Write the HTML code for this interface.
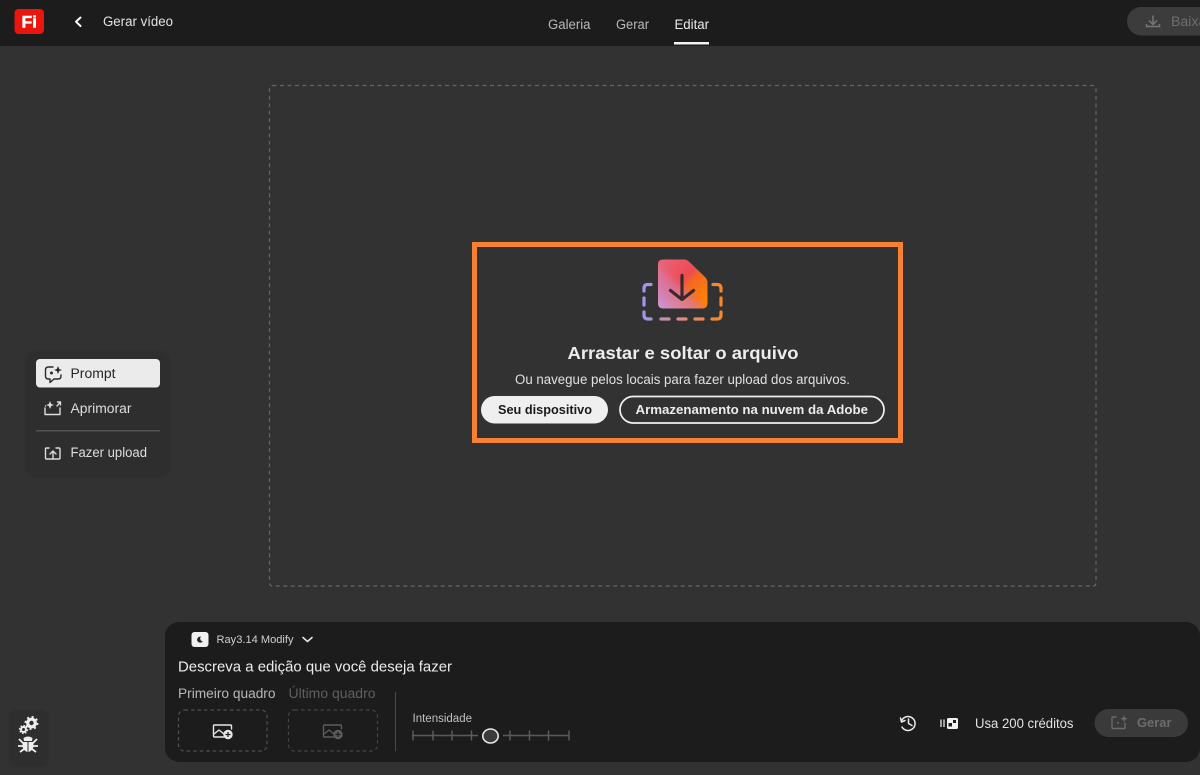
<!DOCTYPE html>
<html lang="pt">
<head>
<meta charset="utf-8">
<title>Gerar vídeo</title>
<style>
html,body{margin:0;padding:0;width:1200px;height:775px;overflow:hidden;background:#323232}
svg{display:block}
text{font-family:"Liberation Sans",sans-serif}
</style>
</head>
<body>
<svg width="1200" height="775" viewBox="0 0 1200 775" xmlns="http://www.w3.org/2000/svg">
<defs>
<linearGradient id="doc" x1="0" y1="0" x2="1" y2="1">
<stop offset="0" stop-color="#e8687c"/><stop offset=".45" stop-color="#ee4a52"/><stop offset=".58" stop-color="#f56a20"/><stop offset="1" stop-color="#ff8a00"/>
</linearGradient>
<linearGradient id="doc2" x1="0" y1="1" x2="1" y2="0">
<stop offset="0" stop-color="#c89ae0"/><stop offset=".4" stop-color="#d878a0" stop-opacity=".7"/><stop offset=".55" stop-color="#ee5a6c" stop-opacity="0"/>
</linearGradient>
<linearGradient id="dash" gradientUnits="userSpaceOnUse" x1="644" y1="319" x2="721" y2="319">
<stop offset="0" stop-color="#a394ee"/><stop offset=".45" stop-color="#e08a8c"/><stop offset="1" stop-color="#f8862a"/>
</linearGradient>
<filter id="sh" x="-20%" y="-20%" width="140%" height="140%"><feDropShadow dx="0" dy="1" stdDeviation="3" flood-color="#000" flood-opacity=".22"/></filter>
</defs>

<rect width="1200" height="775" fill="#323232"/>
<rect width="1200" height="46" fill="#1c1c1c"/>

<!-- logo -->
<rect x="14.500" y="9" width="29.500" height="25" rx="4" fill="#e9160e"/>
<text x="21.500" y="27.700" font-size="16.500" font-weight="700" stroke="#fff" stroke-width=".5" fill="#fff" textLength="15.500" lengthAdjust="spacingAndGlyphs">Fi</text>

<!-- back -->
<path d="M80.500 17.500 L76 21.700 L80.500 26" fill="none" stroke="#fff" stroke-width="2" stroke-linecap="round" stroke-linejoin="round"/>
<text x="103" y="26" font-size="13.500" fill="#e2e2e2" textLength="70" lengthAdjust="spacingAndGlyphs">Gerar vídeo</text>

<!-- tabs -->
<text x="548" y="29" font-size="13.500" fill="#b8b8b8" textLength="42.500" lengthAdjust="spacingAndGlyphs">Galeria</text>
<text x="616" y="29" font-size="13.500" fill="#b8b8b8" textLength="33" lengthAdjust="spacingAndGlyphs">Gerar</text>
<text x="674.500" y="29" font-size="13.500" fill="#ececec" textLength="34.500" lengthAdjust="spacingAndGlyphs">Editar</text>
<rect x="674" y="42" width="35" height="2.500" fill="#f2f2f2"/>

<!-- download btn -->
<rect x="1127" y="7" width="120" height="28.500" rx="14.250" fill="#3c3c3c"/>
<path d="M1153 15.500 V24 M1149 20.500 L1153 24.500 L1157 20.500 M1146.500 24 V26.500 H1159.500 V24" fill="none" stroke="#777" stroke-width="1.500"/>
<text x="1171" y="26" font-size="13.500" fill="#6f6f6f" textLength="40" lengthAdjust="spacingAndGlyphs">Baixar</text>

<!-- dropzone -->
<rect x="269.500" y="85.500" width="826.500" height="500.500" rx="3" fill="none" stroke="#666" stroke-width="1.200" stroke-dasharray="4 3.500"/>

<!-- orange highlight -->
<rect x="474.500" y="244.500" width="426" height="196" fill="none" stroke="#f58232" stroke-width="5"/>

<!-- upload illustration -->
<g fill="none" stroke="url(#dash)" stroke-width="3.200" stroke-linecap="round">
<path d="M651 284.500 H648 Q644 284.500 644 288.500 V291"/>
<path d="M644 298 V305"/>
<path d="M644 312 V315 Q644 319 648 319 H651"/>
<path d="M661 319 H669 M678 319 H686 M695 319 H703"/>
<path d="M712 319 H717 Q721 319 721 315 V312"/>
<path d="M721 305 V298"/>
<path d="M713 284.500 H717 Q721 284.500 721 288.500 V291"/>
</g>
<path d="M663 259.500 H684 Q687 259.500 689.500 262 L705 277 Q707.500 279.500 707.500 282.500 V303 Q707.500 308.500 702 308.500 H663.500 Q658 308.500 658 303 V264.500 Q658 259.500 663 259.500 Z" fill="url(#doc)"/>
<path d="M663 259.500 H684 Q687 259.500 689.500 262 L705 277 Q707.500 279.500 707.500 282.500 V303 Q707.500 308.500 702 308.500 H663.500 Q658 308.500 658 303 V264.500 Q658 259.500 663 259.500 Z" fill="url(#doc2)"/>
<path d="M682 275.500 V298 M670.500 290.500 L682 299.500 L693.500 290.500" fill="none" stroke="#3a2a30" stroke-width="3.200" stroke-linecap="round" stroke-linejoin="round"/>

<text x="567.500" y="359" font-size="17.500" font-weight="700" fill="#ededed" textLength="231" lengthAdjust="spacingAndGlyphs">Arrastar e soltar o arquivo</text>
<text x="515" y="384" font-size="13.500" fill="#e0e0e0" textLength="335" lengthAdjust="spacingAndGlyphs">Ou navegue pelos locais para fazer upload dos arquivos.</text>

<rect x="481" y="396" width="127" height="27.500" rx="13.750" fill="#efefef"/>
<text x="498" y="414" font-size="13" font-weight="700" fill="#1a1a1a" textLength="94" lengthAdjust="spacingAndGlyphs">Seu dispositivo</text>
<rect x="620" y="396.500" width="264" height="26.500" rx="13.250" fill="none" stroke="#f0f0f0" stroke-width="1.700"/>
<text x="635.500" y="414" font-size="13" font-weight="700" fill="#ececec" textLength="232.500" lengthAdjust="spacingAndGlyphs">Armazenamento na nuvem da Adobe</text>

<!-- left menu -->
<rect x="27" y="352" width="141" height="122" rx="9" fill="#2e2e2e" filter="url(#sh)"/>
<rect x="36" y="359" width="124" height="28.500" rx="4" fill="#ebebeb"/>
<g fill="none" stroke="#2a2a2a" stroke-width="1.400" stroke-linejoin="round" stroke-linecap="round">
<path d="M53 367 H48.500 Q45.500 367 45.500 370 V376 Q45.500 379 48.500 379 H50 V382.500 L54 379 H58 Q61 379 61 376 V375"/>
</g>
<circle cx="51.500" cy="373" r="1.500" fill="#2a2a2a"/>
<path d="M58 366 L59.200 369 L62 370 L59.200 371 L58 374 L56.800 371 L54 370 L56.800 369 Z" fill="#2a2a2a"/>
<text x="70.500" y="378" font-size="13.500" fill="#262626" textLength="45" lengthAdjust="spacingAndGlyphs">Prompt</text>

<g fill="none" stroke="#dcdcdc" stroke-width="1.400" stroke-linecap="round" stroke-linejoin="round">
<path d="M45 408 V414.500 H60 V408"/>
<path d="M57 406 L60.500 402 M57.500 402 H60.500 V405"/>
<path d="M45.500 406 H45.501"/>
</g>
<path d="M50 401 L51.200 404 L54 405 L51.200 406 L50 409 L48.800 406 L46 405 L48.800 404 Z" fill="#dcdcdc"/>
<text x="70.500" y="413" font-size="13.500" fill="#dedede" textLength="61" lengthAdjust="spacingAndGlyphs">Aprimorar</text>

<rect x="36" y="430" width="124" height="1.500" fill="#525252"/>

<g fill="none" stroke="#dcdcdc" stroke-width="1.400" stroke-linecap="round" stroke-linejoin="round">
<path d="M49 448 H46.500 Q45.500 448 45.500 449 V458 Q45.500 459 46.500 459 H59 Q60 459 60 458 V449 Q60 448 59 448 H56"/>
<path d="M53 459 V451 M50 454 L53 451 L56 454"/>
</g>
<text x="70.500" y="457" font-size="13.500" fill="#dedede" textLength="76.500" lengthAdjust="spacingAndGlyphs">Fazer upload</text>

<!-- debug widget -->
<rect x="11" y="711" width="35" height="52" rx="3" fill="#2e2e2e" filter="url(#sh)"/>
<circle cx="31.500" cy="723" r="3.800" fill="none" stroke="#eee" stroke-width="3.200"/>
<circle cx="31.500" cy="723" r="6" fill="none" stroke="#eee" stroke-width="2" stroke-dasharray="2 2.700"/>
<circle cx="23.500" cy="729.500" r="2.500" fill="none" stroke="#eee" stroke-width="2"/>
<circle cx="23.500" cy="729.500" r="4" fill="none" stroke="#eee" stroke-width="1.300" stroke-dasharray="1.500 1.600"/>
<path d="M23.500 738 Q28 735 32.500 738 L32 741 H24 Z" fill="#eee"/>
<path d="M22.500 742 H27.500 V752 Q24 751 22.500 747 Z M28.500 742 H33.500 V747 Q32 751 28.500 752 Z" fill="#eee"/>
<path d="M19 739 L23 743 M37 739 L33 743 M18 746 H23 M38 746 H33 M20 752 L24 749 M36 752 L32 749" stroke="#eee" stroke-width="1.800" fill="none"/>

<!-- bottom panel -->
<rect x="165" y="622" width="1035" height="140" rx="14" fill="#1c1c1c"/>

<rect x="191.500" y="632" width="17" height="15" rx="3" fill="#f0f0f0"/>
<path d="M197 640 A3.500 3.500 0 0 1 201 636.500 A3 3 0 0 0 203 641.500 A3.500 3.500 0 0 1 197 640 Z" fill="#222"/>
<text x="216.500" y="643" font-size="11" fill="#cfcfcf" textLength="77" lengthAdjust="spacingAndGlyphs">Ray3.14 Modify</text>
<path d="M303 637.500 L307.500 641.500 L312 637.500" fill="none" stroke="#e4e4e4" stroke-width="1.600" stroke-linecap="round" stroke-linejoin="round"/>

<text x="178" y="671.500" font-size="14.500" fill="#ececec" textLength="274" lengthAdjust="spacingAndGlyphs">Descreva a edição que você deseja fazer</text>

<text x="178" y="698" font-size="13.500" fill="#b8b8b8" textLength="97.500" lengthAdjust="spacingAndGlyphs">Primeiro quadro</text>
<text x="288.500" y="698" font-size="13.500" fill="#5f5f5f" textLength="87" lengthAdjust="spacingAndGlyphs">Último quadro</text>

<rect x="178.500" y="710" width="88.500" height="41" rx="6" fill="none" stroke="#505050" stroke-width="1.200" stroke-dasharray="3.500 3"/>
<rect x="288.500" y="710" width="89" height="41" rx="6" fill="none" stroke="#444" stroke-width="1.200" stroke-dasharray="3.500 3"/>

<g fill="none" stroke="#e6e6e6" stroke-width="1.400" stroke-linejoin="round" stroke-linecap="round">
<path d="M224 737 H214.500 Q213.500 737 213.500 736 V726 Q213.500 725 214.500 725 H230.500 Q231.500 725 231.500 726 V729"/>
<path d="M214 734 L219 730 L224 734"/>
</g>
<circle cx="228" cy="734.500" r="4.700" fill="#e6e6e6"/>
<path d="M228 732 V737 M225.500 734.500 H230.500" stroke="#1c1c1c" stroke-width="1.200"/>

<g fill="none" stroke="#5c5c5c" stroke-width="1.400" stroke-linejoin="round" stroke-linecap="round">
<path d="M334 737 H324.500 Q323.500 737 323.500 736 V726 Q323.500 725 324.500 725 H340.500 Q341.500 725 341.500 726 V729"/>
<path d="M324 734 L329 730 L334 734"/>
</g>
<circle cx="338" cy="734.500" r="4.700" fill="#5c5c5c"/>
<path d="M338 732 V737 M335.500 734.500 H340.500" stroke="#1c1c1c" stroke-width="1.200"/>

<rect x="395" y="692" width="1" height="59" fill="#4a4a4a"/>

<!-- slider -->
<text x="412.500" y="722" font-size="11.500" fill="#c0c0c0" textLength="59.500" lengthAdjust="spacingAndGlyphs">Intensidade</text>
<path d="M412 735.500 H478 M503 735.500 H569" stroke="#5a5a5a" stroke-width="1.400"/>
<path d="M413 730.500 V740.500 M433 730.500 V740.500 M452 730.500 V740.500 M471.500 730.500 V740.500 M510 730.500 V740.500 M529.500 730.500 V740.500 M548.500 730.500 V740.500 M569 730.500 V740.500" stroke="#5f5f5f" stroke-width="1.400"/>
<ellipse cx="490.500" cy="736" rx="7.700" ry="7" fill="#3a3a3a" stroke="#e8e8e8" stroke-width="1.600"/>

<!-- right controls -->
<g fill="none" stroke="#ececec" stroke-width="1.500" stroke-linecap="round" stroke-linejoin="round">
<path d="M902 720 A7 7 0 1 1 902 727"/>
<path d="M900.500 718 L901.500 722 L905 720.500" />
<path d="M908.500 719 V723.500 L912 725.500"/>
</g>

<path d="M941 719.500 V727 M944 719.500 V727" stroke="#cfcfcf" stroke-width="1.500"/>
<rect x="947" y="718" width="11" height="11" rx="1.500" fill="#f0f0f0"/>
<rect x="948.500" y="723" width="3.500" height="3.500" fill="#1c1c1c"/>
<rect x="953" y="720" width="3" height="3" fill="#1c1c1c"/>

<text x="975" y="728" font-size="13.500" fill="#e2e2e2" textLength="98.500" lengthAdjust="spacingAndGlyphs">Usa 200 créditos</text>

<rect x="1094.500" y="709" width="93.500" height="28" rx="14" fill="#3a3a3a"/>
<g fill="none" stroke="#6a6a6a" stroke-width="1.400" stroke-linejoin="round" stroke-linecap="round">
<path d="M1116 717 H1113 Q1112 717 1112 718 V727.500 Q1112 728.500 1113 728.500 H1124 Q1125 728.500 1125 727.500 V723"/>
</g>
<circle cx="1118" cy="723" r="1" fill="#6a6a6a"/>
<path d="M1124 715 L1125 717.800 L1127.800 718.800 L1125 719.800 L1124 722.600 L1123 719.800 L1120.200 718.800 L1123 717.800 Z" fill="#6a6a6a"/>
<text x="1137" y="727" font-size="13" font-weight="700" fill="#6c6c6c" textLength="34.500" lengthAdjust="spacingAndGlyphs">Gerar</text>
</svg>
</body>
</html>
